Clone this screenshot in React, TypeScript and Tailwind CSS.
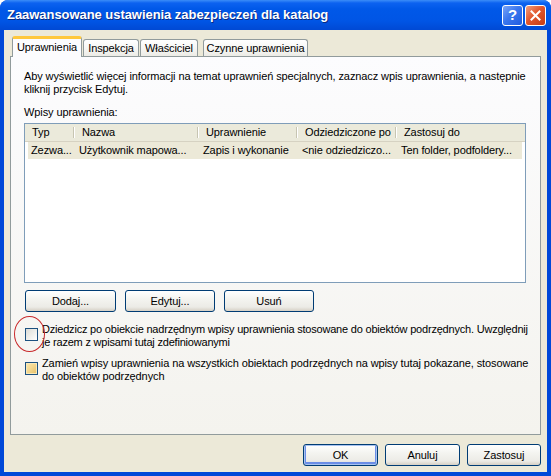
import React from 'react'

const font = { fontFamily: '"Liberation Sans", Arial, sans-serif' }

const tabs = [
  { label: 'Uprawnienia', w: 'w-[70px]' },
  { label: 'Inspekcja', w: 'w-[56px]' },
  { label: 'Właściciel', w: 'w-[58px]' },
  { label: 'Czynne uprawnienia', w: 'w-[105px]' },
]

const columns = [
  { label: 'Typ', w: 'w-[50px]' },
  { label: 'Nazwa', w: 'w-[124px]' },
  { label: 'Uprawnienie', w: 'w-[99px]' },
  { label: 'Odziedziczone po', w: 'w-[99px]' },
  { label: 'Zastosuj do', w: 'flex-1' },
]

const row = ['Zezwa...', 'Użytkownik mapowa...', 'Zapis i wykonanie', '<nie odziedziczo...', 'Ten folder, podfoldery...']

function XpButton({ label, w, isDefault }: { label: string; w: string; isDefault?: boolean }) {
  return (
    <button
      className={`${w} h-[22px] rounded-[3px] border border-[#003c74] bg-[linear-gradient(to_bottom,#ffffff_0%,#f4f4f0_40%,#ecebe6_80%,#d6d0c5_100%)] text-[11px] text-black flex items-center justify-center ${
        isDefault ? 'shadow-[inset_0_0_0_1px_#a8c3f0,inset_0_-1px_0_2px_#6c8ee6]' : ''
      }`}
    >
      {label}
    </button>
  )
}

function Checkbox({ tan }: { tan?: boolean }) {
  return (
    <span
      className={`block w-[13px] h-[13px] shrink-0 border border-[#1c5180] ${
        tan
          ? 'bg-[linear-gradient(135deg,#fbeab0_0%,#f3d68c_50%,#e3bd66_100%)] shadow-[inset_0_0_0_1px_#f8e8b8]'
          : 'bg-[linear-gradient(135deg,#dcdcd7_0%,#eeeeea_50%,#ffffff_100%)]'
      }`}
    />
  )
}

export default function App() {
  return (
    <div style={font} className="w-[551px] h-[476px] flex flex-col bg-[#0048d8] rounded-t-[8px] overflow-hidden text-[11px] tracking-[-0.1px] text-black">
      {/* title bar */}
      <div className="h-[30px] shrink-0 flex items-center pl-[7px] pr-[5px] bg-[linear-gradient(to_bottom,#3b8df8_0%,#0c62f0_10%,#0058e8_30%,#0055e5_70%,#0049d4_100%)]">
        <span className="flex-1 text-white font-bold text-[13px] tracking-[-0.05px] [text-shadow:1px_1px_0_#0a2a80]">
          Zaawansowane ustawienia zabezpieczeń dla katalog
        </span>
        <div className="flex gap-[2px]">
          <div className="w-[21px] h-[21px] rounded-[3px] border border-white flex items-center justify-center bg-[linear-gradient(135deg,#7aa5f8_0%,#3b77ee_45%,#1f5ce0_100%)] text-white font-bold text-[15px]">
            ?
          </div>
          <div className="w-[21px] h-[21px] rounded-[3px] border border-white flex items-center justify-center bg-[linear-gradient(135deg,#f0a080_0%,#e2572e_45%,#c63c14_100%)]">
            <svg width="11" height="11" viewBox="0 0 11 11">
              <path d="M1.5 1.5 L9.5 9.5 M9.5 1.5 L1.5 9.5" stroke="white" strokeWidth="2" strokeLinecap="square" />
            </svg>
          </div>
        </div>
      </div>

      {/* body */}
      <div className="flex-1 mx-[4px] mb-[4px] bg-[#ece9d8] flex flex-col pt-[6px] pl-[6px] pr-[6px]">
        <div className="flex items-end pl-[2px] h-[20px]">
          {tabs.map((t, i) =>
            i === 0 ? (
              <div
                key={t.label}
                className={`${t.w} relative z-10 h-[21px] -mb-px bg-[#fcfcfe] border-x border-[#919b9c] rounded-t-[3px] border-t-[3px] border-t-[#ffc83c] flex items-center justify-center pb-[2px]`}
              >
                {t.label}
              </div>
            ) : (
              <div
                key={t.label}
                className={`${t.w} h-[17px] ml-[1px] border border-b-0 border-[#919b9c] rounded-t-[3px] bg-[linear-gradient(to_bottom,#ffffff_0%,#f7f7f5_50%,#ecebe6_100%)] flex items-center justify-center ${i === 3 ? 'ml-[5px]' : ''}`}
              >
                {t.label}
              </div>
            )
          )}
        </div>

        <div className="w-[531px] h-[379px] border border-[#919b9c] bg-[linear-gradient(to_bottom,#fcfcfe_0%,#f4f3ee_100%)] flex flex-col pl-[13px] pr-[4px] pt-[13px]">
          <p className="leading-[13px]">
            Aby wyświetlić więcej informacji na temat uprawnień specjalnych, zaznacz wpis uprawnienia, a następnie
            kliknij przycisk Edytuj.
          </p>
          <p className="mt-[10px] leading-[13px]">Wpisy uprawnienia:</p>

          <div className="mt-[4px] w-[502px] h-[160px] border border-[#7f9db9] bg-white flex flex-col">
            <div className="h-[18px] flex bg-[#ebeadb] border-b border-[#d6d2c2]">
              {columns.map((c, i) => (
                <div key={c.label} className={`${c.w} flex items-center relative pl-[7px]`}>
                  {c.label}
                  {i < columns.length - 1 && (
                    <span className="absolute right-0 top-[3px] bottom-[3px] w-[2px] border-l border-[#c7c5b2] border-r border-r-white" />
                  )}
                </div>
              ))}
            </div>
            <div className="h-[17px] mx-[3px] flex bg-[#ece9d8]">
              {row.map((r, i) => (
                <div key={i} className={`${columns[i].w} ${i === 0 ? '-ml-[3px] pl-[6px]' : 'pl-[4px]'} ${i === 4 ? 'mr-[3px]' : ''} flex items-center whitespace-nowrap`}>
                  {r}
                </div>
              ))}
            </div>
          </div>

          <div className="mt-[7px] flex gap-[9px] pl-[1px]">
            <XpButton label="Dodaj..." w="w-[91px]" />
            <XpButton label="Edytuj..." w="w-[90px]" />
            <XpButton label="Usuń" w="w-[90px]" />
          </div>

          <div className="mt-[11px] flex gap-[4px] pl-[1px] relative">
            <div className="mt-[5px]">
              <Checkbox />
            </div>
            <p className="leading-[13px] tracking-[-0.2px]">
              Dziedzicz po obiekcie nadrzędnym wpisy uprawnienia stosowane do obiektów podrzędnych. Uwzględnij je razem z wpisami tutaj zdefiniowanymi
            </p>
            <span className="absolute left-[-10px] top-[-7px] w-[31px] h-[36px] rounded-[50%] border border-[#c8282a]" />
          </div>

          <div className="mt-[8px] flex gap-[4px] pl-[1px]">
            <div className="mt-[5px]">
              <Checkbox tan />
            </div>
            <p className="leading-[13px] pr-[4px]">
              Zamień wpisy uprawnienia na wszystkich obiektach podrzędnych na wpisy tutaj pokazane, stosowane do obiektów podrzędnych
            </p>
          </div>
        </div>

        <div className="mt-[9px] flex justify-end gap-[7px]">
          <XpButton label="OK" w="w-[75px]" isDefault />
          <XpButton label="Anuluj" w="w-[75px]" />
          <XpButton label="Zastosuj" w="w-[74px]" />
        </div>
      </div>
    </div>
  )
}
